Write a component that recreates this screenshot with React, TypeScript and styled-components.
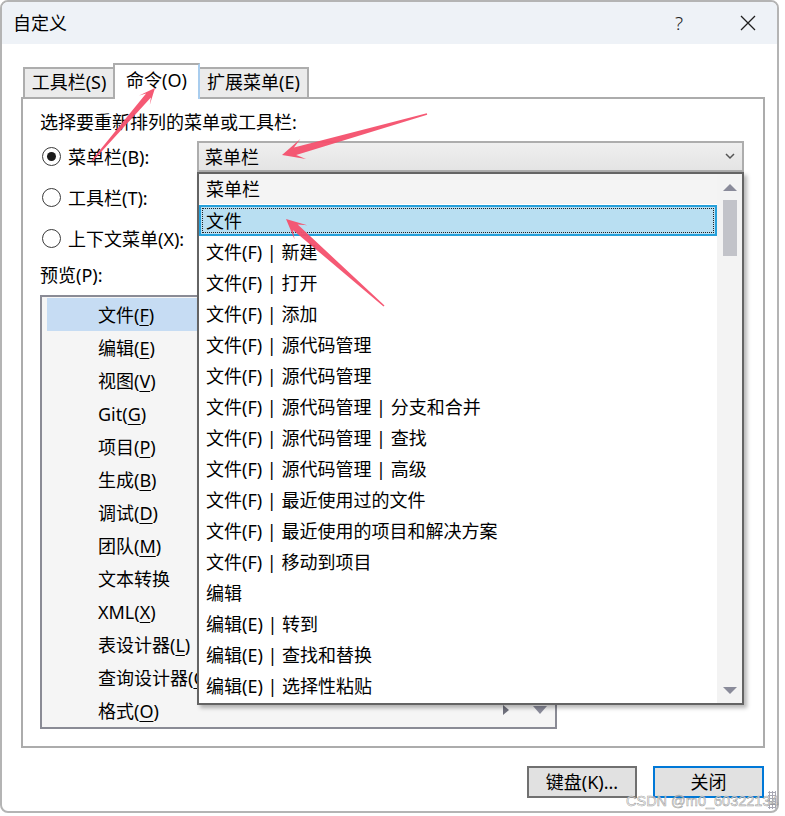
import React from "react";
import styled, { createGlobalStyle } from "styled-components";

const GlobalStyle = createGlobalStyle`
  html, body {
    margin: 0;
    padding: 0;
    background: #ffffff;
  }
  body {
    font-family: "Noto Sans", "Noto Sans CJK SC", sans-serif;
    font-size: 18px;
    color: #000;
  }
  * { box-sizing: border-box; }
`;

type Key = { label: string; key?: string };

const dropItems = [
  "菜单栏",
  "文件",
  "文件(F) | 新建",
  "文件(F) | 打开",
  "文件(F) | 添加",
  "文件(F) | 源代码管理",
  "文件(F) | 源代码管理",
  "文件(F) | 源代码管理 | 分支和合并",
  "文件(F) | 源代码管理 | 查找",
  "文件(F) | 源代码管理 | 高级",
  "文件(F) | 最近使用过的文件",
  "文件(F) | 最近使用的项目和解决方案",
  "文件(F) | 移动到项目",
  "编辑",
  "编辑(E) | 转到",
  "编辑(E) | 查找和替换",
  "编辑(E) | 选择性粘贴",
];

const previewItems: Key[] = [
  { label: "文件", key: "F" },
  { label: "编辑", key: "E" },
  { label: "视图", key: "V" },
  { label: "Git", key: "G" },
  { label: "项目", key: "P" },
  { label: "生成", key: "B" },
  { label: "调试", key: "D" },
  { label: "团队", key: "M" },
  { label: "文本转换" },
  { label: "XML", key: "X" },
  { label: "表设计器", key: "L" },
  { label: "查询设计器", key: "Q" },
  { label: "格式", key: "O" },
];

// red callout arrows, page coordinates
const arrows = [
  { tail: [92, 161], tip: [155, 88], len: 16, w: 14, neck: 3.2 },
  { tail: [427, 114], tip: [282, 155], len: 22, w: 21, neck: 4 },
  { tail: [384, 306], tip: [286, 219], len: 20, w: 19, neck: 3.6 },
];

const arrowPoints = (tail: number[], tip: number[], len: number, w: number, neckW: number) => {
  const dx = tip[0] - tail[0];
  const dy = tip[1] - tail[1];
  const d = Math.hypot(dx, dy);
  const ux = dx / d, uy = dy / d;
  const nx = -uy, ny = ux;
  const neck = 0.62 * len;
  const p = (bx: number, by: number, back: number, side: number) =>
    `${(bx - ux * back + nx * side).toFixed(1)},${(by - uy * back + ny * side).toFixed(1)}`;
  return [
    p(tail[0], tail[1], 0, 0.7),
    p(tip[0], tip[1], neck, neckW),
    p(tip[0], tip[1], len, w / 2),
    p(tip[0], tip[1], 0, 0),
    p(tip[0], tip[1], len, -w / 2),
    p(tip[0], tip[1], neck, -neckW),
    p(tail[0], tail[1], 0, -0.7),
  ].join(" ");
};

const Root = styled.div`
  position: relative;
  width: 785px;
  height: 816px;
  overflow: hidden;
`;

const Window = styled.div`
  position: relative;
  width: 779px;
  height: 813px;
  border: 2px solid #b4b4b4;
  border-radius: 8px;
  background: #fff;
  display: flex;
  flex-direction: column;
  overflow: hidden;
`;

const TitleBar = styled.div`
  height: 42px;
  flex-shrink: 0;
  background: #eef2f7;
  display: flex;
  align-items: center;
  padding: 0 21px 0 11px;
`;

const Title = styled.span`
  font-size: 18px;
  line-height: 24px;
`;

const TitleButtons = styled.div`
  margin-left: auto;
  display: flex;
  align-items: center;
  gap: 57px;
`;

const HelpMark = styled.span`
  font-size: 19px;
  font-weight: 300;
  line-height: 24px;
  color: #222;
`;

const Body = styled.div`
  flex: 1;
  display: flex;
  flex-direction: column;
  padding: 19px 12px 0 19px;
`;

const TabRow = styled.div`
  display: flex;
  align-items: flex-end;
  margin-left: 2px;
  margin-bottom: -2px;
  position: relative;
  z-index: 1;
`;

const Tab = styled.div<{ $w: number; $active?: boolean }>`
  width: ${(p) => p.$w}px;
  height: ${(p) => (p.$active ? 36 : 30)}px;
  margin-bottom: ${(p) => (p.$active ? 0 : 2)}px;
  margin-left: -2px;
  &:first-child { margin-left: 0; }
  border: 2px solid #adadad;
  border-bottom: none;
  border-right-color: ${(p) => (p.$active ? "#a9cdee" : "#adadad")};
  background: ${(p) => (p.$active ? "#ffffff" : "#ebebeb")};
  position: relative;
  z-index: ${(p) => (p.$active ? 2 : 1)};
  display: flex;
  align-items: center;
  justify-content: center;
  padding-bottom: ${(p) => (p.$active ? 5 : 2)}px;
  line-height: 24px;
  white-space: nowrap;
`;

const Panel = styled.div`
  height: 651px;
  border: 2px solid #acacac;
  position: relative;
  padding: 11px 0 0 17px;
  display: flex;
  flex-direction: column;
`;

const SectionLabel = styled.div<{ $gap?: number }>`
  line-height: 24px;
  margin-top: ${(p) => p.$gap || 0}px;
  white-space: nowrap;
`;

const OptionGrid = styled.div`
  display: grid;
  grid-template-columns: 157px 547px;
  grid-auto-rows: 31px;
  row-gap: 10px;
  margin-top: 7px;
`;

const RadioRow = styled.label`
  grid-column: 1;
  display: flex;
  align-items: center;
  gap: 7px;
  padding-left: 2px;
  line-height: 24px;
  white-space: nowrap;
`;

const RadioCircle = styled.span<{ $checked?: boolean }>`
  width: 19px;
  height: 19px;
  flex-shrink: 0;
  border-radius: 50%;
  border: 1.5px solid #3a3a3a;
  display: flex;
  align-items: center;
  justify-content: center;
  &::after {
    content: "";
    width: 9px;
    height: 9px;
    border-radius: 50%;
    background: ${(p) => (p.$checked ? "#1b1b1b" : "transparent")};
  }
`;

const ComboCell = styled.div`
  grid-column: 2;
  grid-row: 1;
  position: relative;
`;

const Combo = styled.div`
  height: 31px;
  border: 2px solid #adadad;
  background: linear-gradient(#efefef, #e4e4e4);
  display: flex;
  align-items: center;
  padding: 0 7px 0 6px;
  line-height: 24px;
`;

const Chevron = styled.svg`
  margin-left: auto;
`;

const Dropdown = styled.div`
  position: absolute;
  top: 100%;
  left: 0;
  width: 547px;
  height: 533px;
  border: 2px solid #646464;
  background: #fff;
  box-shadow: 3px 3px 4px rgba(0, 0, 0, 0.28);
  display: flex;
  z-index: 10;
`;

const DropList = styled.div`
  flex: 1;
  display: flex;
  flex-direction: column;
  overflow: hidden;
`;

const DropItem = styled.div<{ $variant: "header" | "selected" | "normal" }>`
  height: 31px;
  flex-shrink: 0;
  display: flex;
  align-items: center;
  line-height: 24px;
  white-space: nowrap;
  position: relative;
  padding-left: ${(p) => (p.$variant === "selected" ? 5 : 7)}px;
  background: ${(p) =>
    p.$variant === "header" ? "#f4f4f4" : p.$variant === "selected" ? "#b9dff2" : "transparent"};
  border: ${(p) => (p.$variant === "selected" ? "2px solid #26a0da" : "none")};
  border-bottom: ${(p) =>
    p.$variant === "header" ? "1px solid #fff" : p.$variant === "selected" ? "2px solid #26a0da" : "none"};
  &::after {
    content: "";
    display: ${(p) => (p.$variant === "selected" ? "block" : "none")};
    position: absolute;
    inset: 1px;
    border: 1px dotted #222;
  }
`;

const ScrollBar = styled.div`
  width: 25px;
  flex-shrink: 0;
  background: #f3f3f3;
  display: flex;
  flex-direction: column;
  align-items: center;
`;

const ScrollButton = styled.div<{ $down?: boolean }>`
  height: 26px;
  width: 100%;
  flex-shrink: 0;
  display: flex;
  align-items: center;
  justify-content: center;
  margin-top: ${(p) => (p.$down ? "auto" : 0)};
  &::before {
    content: "";
    border-left: 7px solid transparent;
    border-right: 7px solid transparent;
    ${(p) => (p.$down ? "border-top" : "border-bottom")}: 7px solid #8a8b9a;
  }
`;

const Thumb = styled.div`
  width: 14px;
  height: 56px;
  background: #c2c3c9;
`;

const PreviewBox = styled.div`
  margin-top: 8px;
  width: 517px;
  height: 434px;
  border: 2px solid #8a8b95;
  background: #f5f5f5;
  padding: 1px 0 0 5px;
  position: relative;
  display: flex;
  flex-direction: column;
`;

const PreviewItem = styled.div<{ $selected?: boolean }>`
  height: 33px;
  flex-shrink: 0;
  padding-left: 51px;
  display: flex;
  align-items: center;
  line-height: 24px;
  white-space: nowrap;
  background: ${(p) => (p.$selected ? "#c6dcf3" : "transparent")};
`;

const AccessKey = styled.span`
  text-decoration: underline;
  text-decoration-thickness: 1px;
  text-underline-offset: 3px;
`;

const PreviewArrows = styled.div`
  position: absolute;
  right: 8px;
  bottom: 12px;
  display: flex;
  align-items: center;
  gap: 24px;
`;

const RightTri = styled.span`
  border-top: 5px solid transparent;
  border-bottom: 5px solid transparent;
  border-left: 6px solid #6f707c;
`;

const DownTri = styled.span`
  border-left: 7px solid transparent;
  border-right: 7px solid transparent;
  border-top: 8px solid #8a8b9a;
`;

const Footer = styled.div`
  display: flex;
  justify-content: flex-end;
  gap: 16px;
  margin-top: 18px;
  padding-right: 1px;
`;

const Button = styled.button<{ $w: number; $default?: boolean }>`
  width: ${(p) => p.$w}px;
  height: 32px;
  border: 2px solid ${(p) => (p.$default ? "#0078d7" : "#707070")};
  background: #e1e1e1;
  font-family: inherit;
  font-size: 18px;
  line-height: 24px;
  color: #000;
  padding: 0;
  border-radius: 0;
`;

const Grip = styled.span`
  position: absolute;
  right: 1px;
  bottom: 2px;
  width: 8px;
  height: 18px;
  background-image: radial-gradient(circle, #a8a8b4 1px, transparent 1.2px);
  background-size: 3px 3px;
`;

const Watermark = styled.div`
  position: absolute;
  left: 626px;
  top: 791px;
  font-family: "Liberation Sans", Arial, sans-serif;
  font-size: 14.5px;
  line-height: 20px;
  color: rgba(255, 255, 255, 0.85);
  -webkit-text-stroke: 0.6px rgba(130, 130, 130, 0.75);
  white-space: nowrap;
  pointer-events: none;
`;

const Overlay = styled.svg`
  position: absolute;
  left: 0;
  top: 0;
  pointer-events: none;
  z-index: 20;
`;

export default function App() {
  return (
    <Root>
      <GlobalStyle />
      <Window>
        <TitleBar>
          <Title>自定义</Title>
          <TitleButtons>
            <HelpMark>?</HelpMark>
            <svg width="16" height="16" viewBox="0 0 16 16">
              <path d="M1 1 L15 15 M15 1 L1 15" stroke="#1e1e1e" strokeWidth="1.3" fill="none" />
            </svg>
          </TitleButtons>
        </TitleBar>

        <Body>
          <TabRow>
            <Tab $w={92}>工具栏(S)</Tab>
            <Tab $w={87} $active>命令(O)</Tab>
            <Tab $w={111}>扩展菜单(E)</Tab>
          </TabRow>

          <Panel>
            <SectionLabel>选择要重新排列的菜单或工具栏:</SectionLabel>
            <OptionGrid>
              <RadioRow>
                <RadioCircle $checked />
                菜单栏(B):
              </RadioRow>
              <ComboCell>
                <Combo>
                  菜单栏
                  <Chevron width="10" height="7" viewBox="0 0 10 7">
                    <polyline points="1,1 5,5 9,1" stroke="#555" strokeWidth="1.5" fill="none" />
                  </Chevron>
                </Combo>
                <Dropdown>
                  <DropList>
                    {dropItems.map((t, i) => (
                      <DropItem key={i} $variant={i === 0 ? "header" : i === 1 ? "selected" : "normal"}>
                        {t}
                      </DropItem>
                    ))}
                  </DropList>
                  <ScrollBar>
                    <ScrollButton />
                    <Thumb />
                    <ScrollButton $down />
                  </ScrollBar>
                </Dropdown>
              </ComboCell>
              <RadioRow>
                <RadioCircle />
                工具栏(T):
              </RadioRow>
              <RadioRow>
                <RadioCircle />
                上下文菜单(X):
              </RadioRow>
            </OptionGrid>

            <SectionLabel $gap={9}>预览(P):</SectionLabel>
            <PreviewBox>
              {previewItems.map((it, i) => (
                <PreviewItem key={i} $selected={i === 0}>
                  {it.label}
                  {it.key && (
                    <>
                      (<AccessKey>{it.key}</AccessKey>)
                    </>
                  )}
                </PreviewItem>
              ))}
              <PreviewArrows>
                <RightTri />
                <DownTri />
              </PreviewArrows>
            </PreviewBox>
          </Panel>

          <Footer>
            <Button $w={110}>键盘(K)...</Button>
            <Button $w={111} $default>关闭</Button>
          </Footer>
        </Body>
        <Grip />
      </Window>

      <Watermark>CSDN @m0_60322134</Watermark>

      <Overlay width="785" height="816" viewBox="0 0 785 816">
        {arrows.map((a, i) => (
          <polygon key={i} points={arrowPoints(a.tail, a.tip, a.len, a.w, a.neck)} fill="#f4506d" fillOpacity="0.95" />
        ))}
      </Overlay>
    </Root>
  );
}
